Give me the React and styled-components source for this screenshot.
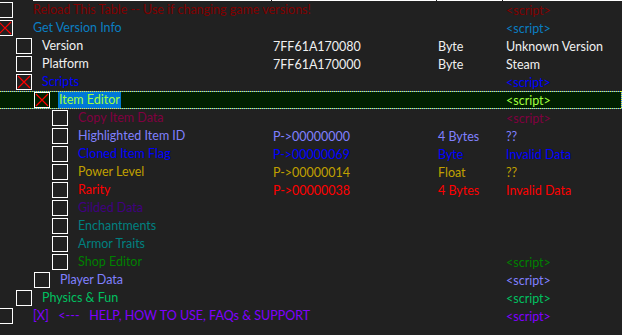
import styled, { createGlobalStyle } from "styled-components"

const GlobalStyle = createGlobalStyle`
    html, body {
        margin: 0;
        padding: 0;
        background-color: #212121;
        overflow: hidden;
    }
    #root {
        width: 622px;
        height: 335px;
    }
`

const rows = [
    { level: 0, color: "#800000", desc: "Reload This Table -- Use if changing game versions!", value: "<script>" },
    { level: 0, checked: true, color: "#0a7ec2", desc: "Get Version Info", value: "<script>" },
    { level: 1, color: "#f0f0f0", desc: "Version", addr: "7FF61A170080", type: "Byte", value: "Unknown Version" },
    { level: 1, color: "#f0f0f0", desc: "Platform", addr: "7FF61A170000", type: "Byte", value: "Steam" },
    { level: 1, checked: true, color: "#0000ff", desc: "Scripts", value: "<script>" },
    { level: 2, checked: true, selected: true, color: "#a0ff40", desc: "Item Editor", value: "<script>" },
    { level: 3, color: "#800040", desc: "Copy Item Data", value: "<script>" },
    { level: 3, color: "#8080ff", desc: "Highlighted Item ID", addr: "P->00000000", type: "4 Bytes", value: "??" },
    { level: 3, color: "#0000ff", desc: "Cloned Item Flag", addr: "P->00000069", type: "Byte", value: "Invalid Data" },
    { level: 3, color: "#c0a000", desc: "Power Level", addr: "P->00000014", type: "Float", value: "??" },
    { level: 3, color: "#ff0000", desc: "Rarity", addr: "P->00000038", type: "4 Bytes", value: "Invalid Data" },
    { level: 3, color: "#400080", desc: "Gilded Data" },
    { level: 3, color: "#008080", desc: "Enchantments" },
    { level: 3, color: "#008080", desc: "Armor Traits" },
    { level: 3, color: "#008000", desc: "Shop Editor", value: "<script>" },
    { level: 2, color: "#8080ff", desc: "Player Data", value: "<script>" },
    { level: 1, color: "#00c060", desc: "Physics & Fun", value: "<script>" },
    { level: 0, color: "#8000ff", desc: "[X]   <---   HELP, HOW TO USE, FAQs & SUPPORT", value: "<script>" },
]

const Table = styled.div`
    width: 622px;
    height: 335px;
    background-color: #212121;
    font-family: Lato, "Noto Sans", sans-serif;
    font-size: 12.5px;
    display: flex;
    flex-direction: column;
`

const Header = styled.div`
    height: 1px;
    display: flex;
    gap: 1px;
    padding-left: 33px;
`

const HeaderCell = styled.div`
    height: 1px;
    background-color: #ffffff;
    width: ${(p) => p.w}px;
    flex: ${(p) => (p.w ? "none" : "1")};
`

const Row = styled.div`
    position: relative;
    height: 18px;
    display: grid;
    grid-template-columns: 272px 165px 68px 1fr;
    align-items: center;
    color: ${(p) => p.color};
    background-color: ${(p) => (p.selected ? "#001f00" : "transparent")};
    white-space: pre;

    ${(p) => p.selected && `
        &::before, &::after {
            content: "";
            position: absolute;
            left: 0;
            right: 0;
            height: 1px;
            background-image: repeating-linear-gradient(90deg, #e8ff30 0 1px, #2f7cff 1px 2px);
        }
        &::before { top: 0; }
        &::after { bottom: 0; }
    `}
`

const FocusEdge = styled.div`
    position: absolute;
    right: 0;
    top: 0;
    bottom: 0;
    width: 1px;
    background-image: repeating-linear-gradient(180deg, #e8ff30 0 1px, #2f7cff 1px 2px);
`

const DescCell = styled.div`
    display: flex;
    align-items: center;
    height: 18px;
    overflow: visible;
`

const CheckBox = styled.div`
    flex: none;
    box-sizing: border-box;
    width: 16px;
    height: 16px;
    border: 1px solid #ffffff;
    margin-left: ${(p) => (p.level === 0 ? -3 : 16 + 18 * (p.level - 1))}px;
    margin-right: ${(p) => (p.level === 0 ? 20 : 10)}px;
    display: flex;
    svg {
        width: 100%;
        height: 100%;
    }
`

const Label = styled.span`
    line-height: 16px;
    padding: 0 1px 0 ${(p) => (p.selected ? 1 : 0)}px;
    margin-left: ${(p) => (p.selected ? -2 : 0)}px;
    background-color: ${(p) => (p.selected ? "#0078d7" : "transparent")};
`

const Cell = styled.div`
    padding-left: ${(p) => p.pad || 0}px;
`

function Check({ level, checked }) {
    return (
        <CheckBox level={level}>
            {checked && (
                <svg viewBox="0 0 14 14">
                    <path d="M1 1 L13 13 M13 1 L1 13" stroke="#ff0000" strokeWidth="1.2" />
                </svg>
            )}
        </CheckBox>
    )
}

export default function App() {
    return (
        <>
            <GlobalStyle />
            <Table>
                <Header>
                    <HeaderCell w={238} />
                    <HeaderCell w={164} />
                    <HeaderCell w={65} />
                    <HeaderCell />
                </Header>
                {rows.map((r, i) => (
                    <Row key={i} color={r.color} selected={r.selected}>
                        <DescCell>
                            <Check level={r.level} checked={r.checked} />
                            <Label selected={r.selected}>{r.desc}</Label>
                        </DescCell>
                        <Cell pad={1}>{r.addr || ""}</Cell>
                        <Cell pad={1}>{r.type || ""}</Cell>
                        <Cell pad={1}>{r.value || ""}</Cell>
                        {r.selected && <FocusEdge />}
                    </Row>
                ))}
            </Table>
        </>
    )
}
